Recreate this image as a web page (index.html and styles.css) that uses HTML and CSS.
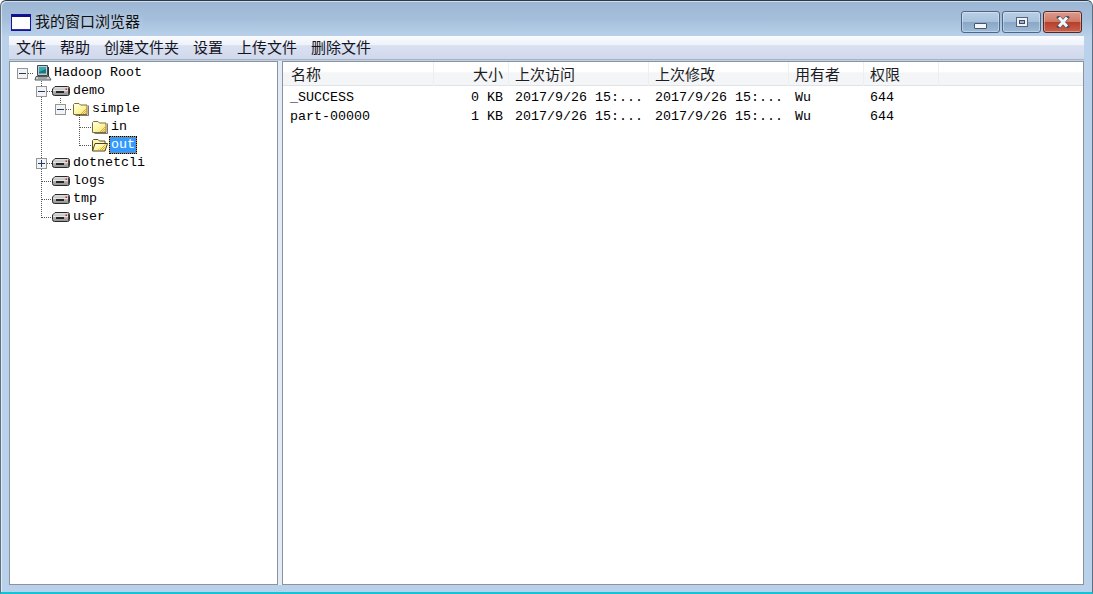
FILE: index.html
```html
<!DOCTYPE html>
<html lang="zh">
<head>
<meta charset="utf-8">
<title>我的窗口浏览器</title>
<link rel="stylesheet" href="styles.css">
</head>
<body>
<svg class="defs" width="0" height="0" aria-hidden="true">
  <defs>
    <linearGradient id="fold" x1="0" y1="0" x2="1" y2="1">
      <stop offset="0" stop-color="#fffff2"/><stop offset="0.5" stop-color="#fff7a0"/><stop offset="1" stop-color="#f4dc78"/>
    </linearGradient>
    <linearGradient id="drv" x1="0" y1="0" x2="0" y2="1">
      <stop offset="0" stop-color="#e4e4e4"/><stop offset="1" stop-color="#8e8e8e"/>
    </linearGradient>
    <pattern id="dith" width="2" height="2" patternUnits="userSpaceOnUse">
      <rect width="1" height="1" fill="#d9a93c"/><rect x="1" y="1" width="1" height="1" fill="#d9a93c"/>
    </pattern>
    <symbol id="i-minus" viewBox="0 0 11 11">
      <rect x="0.5" y="0.5" width="10" height="10" fill="#f3f3f3" stroke="#969696"/>
      <path d="M2 5.5h7" stroke="#1f3a6e"/>
    </symbol>
    <symbol id="i-plus" viewBox="0 0 11 11">
      <rect x="0.5" y="0.5" width="10" height="10" fill="#f3f3f3" stroke="#969696"/>
      <path d="M2 5.5h7M5.5 2v7" stroke="#1f3a6e"/>
    </symbol>
    <symbol id="i-pc" viewBox="0 0 18 16">
      <path d="M3.500 0.500h10v10h-10z" fill="#c4c9cc" stroke="#3f4a52"/>
      <path d="M5 2h7v6.500h-7z" fill="#157a7c"/>
      <path d="M5 2h7v2l-7 3z" fill="#35a9bd"/>
      <path d="M2 11.500h13l2 3.500h-16z" fill="#cfd2cb" stroke="#505a5e"/>
      <path d="M4 13h9" stroke="#6f787a"/>
      <path d="M14.500 2v9" stroke="#30383c"/>
    </symbol>
    <symbol id="i-drive" viewBox="0 0 18 10">
      <path d="M3 0.500h12.500q2 0 2 2v5q0 2-2 2h-13q-2 0-2-2v-4.500z" fill="url(#drv)" stroke="#2a2a2a"/>
      <path d="M1 4h16v1h-16z" fill="#e4e4e4"/>
      <path d="M4 5h8v2h-8z" fill="#262626"/>
      <path d="M13.500 2.500h1.500v1.500h-1.500z" fill="#d8232a"/>
      <path d="M16.500 2v6" stroke="#444"/>
    </symbol>
    <symbol id="i-folder" viewBox="0 0 18 14">
      <path d="M1.500 12.500v-10l1-1h4.500l1.500 1.500h6.500v9.500z" fill="url(#fold)" stroke="#7c6f35"/>
      <path d="M8 12l7-6.500v6.500z" fill="url(#dith)"/>
      <path d="M16.500 3.500v10h-13" fill="none" stroke="#222" opacity="0.6"/>
    </symbol>
    <symbol id="i-open" viewBox="0 0 18 14">
      <path d="M1.500 12.500v-10l1-1h4.500l1.500 1.500h5.500v2.500" fill="#fff7b0" stroke="#5b5228"/>
      <path d="M1.500 13l2.500-7.500h12.500l-2.500 7.500z" fill="url(#fold)" stroke="#4a4424"/>
      <path d="M6 12.500l9-6.500-2 6.500z" fill="url(#dith)"/>
    </symbol>
  </defs>
</svg>
<div class="window">
  <header class="titlebar">
    <svg class="appicon" width="20" height="17" viewBox="0 0 20 17" aria-hidden="true">
      <rect x="0.500" y="0.500" width="19" height="16" fill="#fff" stroke="#14149a"/>
      <rect x="1" y="1" width="18" height="2" fill="#10108a"/>
      <rect x="1" y="15" width="18" height="1" fill="#30309a"/>
    </svg>
    <span class="wintitle">我的窗口浏览器</span>
    <div class="controls">
      <button class="ctl" type="button" aria-label="最小化"><span class="glyph-min"></span></button>
      <button class="ctl" type="button" aria-label="最大化">
        <svg width="12" height="10" viewBox="0 0 12 10" aria-hidden="true"><rect x="0.500" y="0.500" width="11" height="9" fill="#eef2f8" stroke="#566479"/><rect x="3.500" y="3.500" width="5" height="3" fill="#9cb4cf" stroke="#3d4c62"/></svg>
      </button>
      <button class="ctl ctl-close" type="button" aria-label="关闭">
        <svg width="14" height="12" viewBox="0 0 14 12" aria-hidden="true"><path d="M3 1.500l8 9M11 1.500l-8 9" fill="none" stroke="#4a4f5c" stroke-width="4" stroke-linecap="square"/><path d="M3 1.500l8 9M11 1.500l-8 9" fill="none" stroke="#f4f6fa" stroke-width="3"/></svg>
      </button>
    </div>
  </header>
  <nav class="menubar">
    <span>文件</span><span>帮助</span><span>创建文件夹</span><span>设置</span><span>上传文件</span><span>删除文件</span>
  </nav>
  <main class="panes">
    <section class="tree">
      <svg class="guides" width="200" height="170" aria-hidden="true">
        <path class="dots" d="M18 11.500h6M31.500 19v5M37 29.500h5M31.500 35v121M56 47.500h5M50.500 36v6M69.500 53v31M70 65.500h11M70 83.500h11M37 101.500h5M32 119.500h10M32 137.500h10M32 155.500h10"/>
      </svg>
      <div class="node d0"><svg class="exp"><use href="#i-minus"/></svg><svg class="ico pc"><use href="#i-pc"/></svg><span class="label">Hadoop Root</span></div>
      <div class="node d1"><svg class="exp"><use href="#i-minus"/></svg><svg class="ico drive"><use href="#i-drive"/></svg><span class="label">demo</span></div>
      <div class="node d2"><svg class="exp"><use href="#i-minus"/></svg><svg class="ico folder"><use href="#i-folder"/></svg><span class="label">simple</span></div>
      <div class="node d3"><span class="noexp"></span><svg class="ico folder"><use href="#i-folder"/></svg><span class="label">in</span></div>
      <div class="node d3"><span class="noexp"></span><svg class="ico folder"><use href="#i-open"/></svg><span class="label selected">out</span></div>
      <div class="node d1"><svg class="exp"><use href="#i-plus"/></svg><svg class="ico drive"><use href="#i-drive"/></svg><span class="label">dotnetcli</span></div>
      <div class="node d1"><span class="noexp"></span><svg class="ico drive"><use href="#i-drive"/></svg><span class="label">logs</span></div>
      <div class="node d1"><span class="noexp"></span><svg class="ico drive"><use href="#i-drive"/></svg><span class="label">tmp</span></div>
      <div class="node d1"><span class="noexp"></span><svg class="ico drive"><use href="#i-drive"/></svg><span class="label">user</span></div>
    </section>
    <section class="list">
      <div class="cols head">
        <span>名称</span><span class="num">大小</span><span>上次访问</span><span>上次修改</span><span>用有者</span><span>权限</span><span></span>
      </div>
      <div class="cols row">
        <span>_SUCCESS</span><span class="num">0 KB</span><span>2017/9/26 15:...</span><span>2017/9/26 15:...</span><span>Wu</span><span>644</span><span></span>
      </div>
      <div class="cols row">
        <span>part-00000</span><span class="num">1 KB</span><span>2017/9/26 15:...</span><span>2017/9/26 15:...</span><span>Wu</span><span>644</span><span></span>
      </div>
    </section>
  </main>
</div>
</body>
</html>
```
FILE: styles.css
```css
* { box-sizing: border-box; }
html, body { margin: 0; height: 100%; background: #fff; overflow: hidden; }
.defs { position: absolute; }
.window {
  width: 1093px; height: 594px;
  display: flex; flex-direction: column;
  background: linear-gradient(#9bb6d3 0, #a5bfdb 18px, #b9d1ea 36px, #b9d1ea 100%);
  border: 1px solid #5f6f80;
  border-top-color: #2b3a4a;
  border-bottom: 2px solid #12c4d6;
  border-radius: 6px 6px 0 0;
  box-shadow: inset 1px 1px 0 rgba(255,255,255,.55);
  font-family: "Noto Sans CJK SC", "Liberation Sans", sans-serif;
  color: #000;
}
.titlebar {
  height: 35px; flex: none;
  display: flex; align-items: center;
  padding: 7px 10px 0 10px;
}
.appicon { flex: none; }
.wintitle { margin-left: 4px; margin-bottom: 2px; font-size: 15px; line-height: 20px; color: #101010; text-shadow: 0 0 6px rgba(255,255,255,.45); }
.controls { margin-left: auto; display: flex; gap: 2px; align-self: flex-start; margin-top: 3px; }
.ctl {
  width: 39px; height: 22px; padding: 0;
  display: flex; align-items: center; justify-content: center;
  border: 1px solid #4e6685;
  border-radius: 3px;
  background: linear-gradient(#b9cfe6 0, #a9c2dc 48%, #8aa8c6 52%, #9dbbd8 100%);
  box-shadow: inset 0 0 0 1px rgba(255,255,255,.35);
}
.ctl-close {
  border-color: #5a2420;
  background: linear-gradient(#dd9a8c 0, #cf7a68 48%, #b7402a 52%, #c8624e 100%);
}
.glyph-min {
  display: block; width: 13px; height: 6px; margin-top: 7px;
  background: #f4f6fa; border: 1px solid #47566b; border-radius: 1px;
}
.menubar {
  height: 24px; flex: none;
  margin: 0 8px;
  display: flex; align-items: center; gap: 14px;
  padding: 0 7px 2px;
  font-size: 15px; line-height: 20px; color: #14141e;
  background: linear-gradient(#fafbfe 0, #eef2fa 38%, #d9e0f0 42%, #d0d9ec 100%);
  border-bottom: 1px solid #aab2c2;
}
.panes {
  flex: 1; min-height: 0;
  margin: 1px 8px 7px;
  display: flex; gap: 4px;
  background: #e3ebf5;
}
.tree, .list {
  background: #fff;
  border: 1px solid #8c939d;
  position: relative;
}
.tree {
  width: 269px; flex: none;
  padding-top: 2px;
  font-family: "Liberation Mono", "Noto Sans CJK SC", monospace;
  font-size: 13.33px;
}
.guides { position: absolute; left: 0; top: 0; }
.dots { fill: none; stroke: #555; stroke-dasharray: 1 1; shape-rendering: crispEdges; }
.node { height: 18px; display: flex; align-items: flex-start; position: relative; }
.d0 { padding-left: 7px; }
.d1 { padding-left: 26px; }
.d2 { padding-left: 45px; }
.d3 { padding-left: 64px; }
.exp { width: 11px; height: 11px; margin: 4px 6px 0 0; flex: none; }
.noexp { width: 17px; flex: none; }
.ico { flex: none; width: 18px; }
.ico.pc { height: 16px; margin-top: 1px; }
.ico.drive { height: 10px; margin: 4px 1px 0 -1px; }
.ico.folder { height: 14px; margin-top: 2px; }
.label { padding: 0 2px; line-height: 18px; height: 18px; white-space: pre; }
.selected { background: #3399ff; color: #fff; box-shadow: inset 0 0 0 1px #f08000; outline: 1px dotted #000; outline-offset: -1px; }
.list { flex: 1; min-width: 0; overflow: hidden; }
.cols {
  display: grid;
  grid-template-columns: 151px 75px 140px 140px 75px 75px 1fr;
}
.head {
  height: 24px;
  font-size: 15px; line-height: 24px; color: #1c1c24;
  background: linear-gradient(#fff 0, #fff 45%, #f4f5f6 46%, #f4f5f6 100%);
  border-bottom: 1px solid #dfe3e8;
}
.head span { padding: 0 5px 0 8px; border-right: 1px solid #eceef0; }
.head span:nth-child(n+3) { padding-left: 6px; }
.head span:last-child { border-right: 0; }
.row {
  height: 19px;
  font-family: "Liberation Mono", "Noto Sans CJK SC", monospace;
  font-size: 13.33px; line-height: 19px;
}
.row span { padding: 0 6px; white-space: pre; }
.row span:first-child { padding-left: 7px; }
.row:nth-child(2) { margin-top: 2px; }
.num { text-align: right; }
```
